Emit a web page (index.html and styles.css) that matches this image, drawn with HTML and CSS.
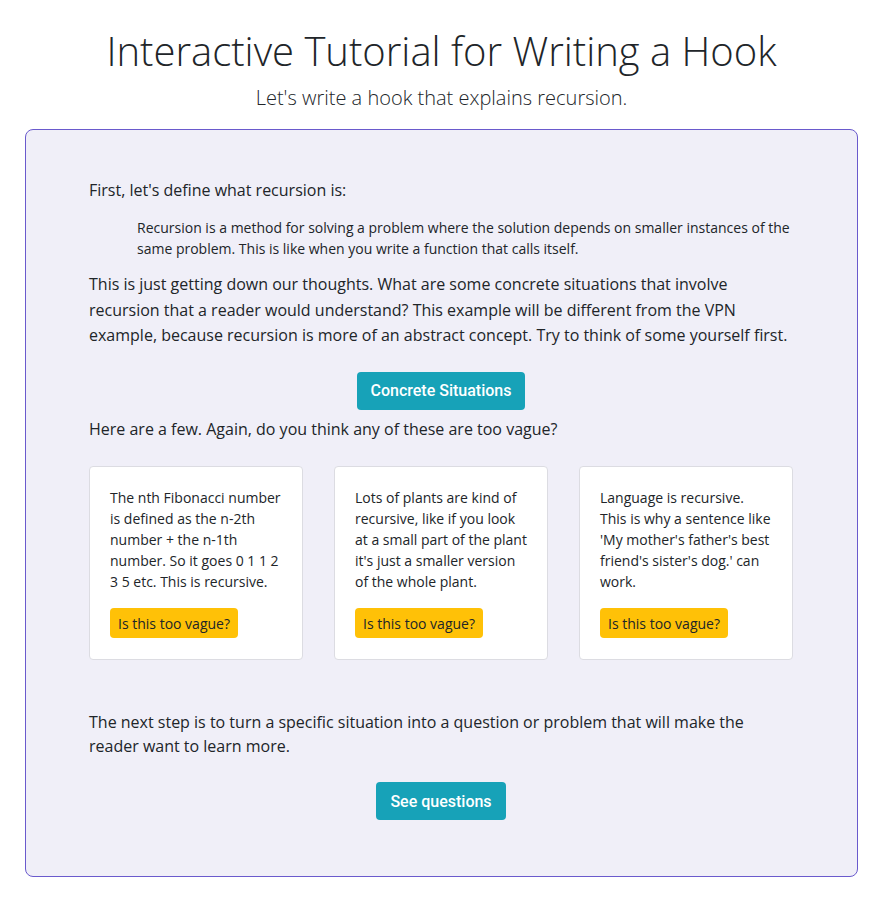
FILE: index.html
```html
<!DOCTYPE html>
<html>
<head>
<meta charset="utf-8">
<link rel="stylesheet" href="styles.css">
</head>
<body>
<header class="header">
  <h1 class="title">Interactive Tutorial for Writing a Hook</h1>
  <p class="lead">Let's write a hook that explains recursion.</p>
</header>
<main class="panel">
  <p class="intro">First, let's define what recursion is:</p>
  <blockquote class="quote">Recursion is a method for solving a problem where the solution depends on smaller instances of the same problem. This is like when you write a function that calls itself.</blockquote>
  <p class="text">This is just getting down our thoughts. What are some concrete situations that involve recursion that a reader would understand? This example will be different from the VPN example, because recursion is more of an abstract concept. Try to think of some yourself first.</p>
  <div class="center"><button class="btn btn-info">Concrete Situations</button></div>
  <p class="text few">Here are a few. Again, do you think any of these are too vague?</p>
  <div class="cards">
    <div class="card">
      <p class="card-text">The nth Fibonacci number is defined as the n-2th number + the n-1th number. So it goes 0 1 1 2 3 5 etc. This is recursive.</p>
      <button class="btn btn-warning">Is this too vague?</button>
    </div>
    <div class="card">
      <p class="card-text">Lots of plants are kind of recursive, like if you look at a small part of the plant it's just a smaller version of the whole plant.</p>
      <button class="btn btn-warning">Is this too vague?</button>
    </div>
    <div class="card">
      <p class="card-text">Language is recursive. This is why a sentence like 'My mother's father's best friend's sister's dog.' can work.</p>
      <button class="btn btn-warning">Is this too vague?</button>
    </div>
  </div>
  <p class="text next">The next step is to turn a specific situation into a question or problem that will make the reader want to learn more.</p>
  <div class="center"><button class="btn btn-info">See questions</button></div>
</main>
</body>
</html>
```
FILE: styles.css
```css
* { box-sizing: border-box; }
body {
  margin: 0;
  padding: 0 30px 40px 25px;
  font-family: "Open Sans", "DejaVu Sans", sans-serif;
  color: #212529;
  background: #fff;
}
.header {
  text-align: center;
  padding-top: 27px;
}
.title {
  margin: 0;
  font-weight: 300;
  font-size: 40px;
  line-height: 1.2;
}
.lead {
  margin: 8px 0 0 0;
  font-weight: 300;
  font-size: 20px;
  line-height: 1.5;
}
.panel {
  margin-top: 16px;
  border: 1px solid #6a5acd;
  border-radius: 8px;
  background: #f0eff8;
  padding: 48px 64px 56px 63px;
}
p { margin: 0; }
.intro {
  font-size: 16px;
  line-height: 24px;
}
.quote {
  margin: 15px 0 0 48px;
  font-size: 14px;
  line-height: 21px;
}
.text {
  font-size: 16px;
  line-height: 25.5px;
}
.quote + .text { margin-top: 13px; }
.center {
  display: flex;
  justify-content: center;
}
.text + .center { margin-top: 23px; }
.btn {
  font-family: Roboto, "Liberation Sans", sans-serif;
  border: 0;
  border-radius: 4px;
  cursor: pointer;
}
.btn-info {
  background: #17a2b8;
  color: #fff;
  font-size: 16px;
  font-weight: 500;
  padding: 0 14px;
  height: 38px;
}
.btn-warning {
  background: #ffc107;
  color: #212529;
  font-family: "Open Sans", sans-serif;
  font-size: 14px;
  height: 30px;
  padding: 0 8px;
  align-self: flex-start;
}
.few { margin-top: 7px; }
.cards {
  display: grid;
  grid-template-columns: repeat(3, 1fr);
  gap: 31px;
  margin-top: 24px;
}
.card {
  background: #fff;
  border: 1px solid #dcdce2;
  border-radius: 4px;
  padding: 20px 20px 21px 20px;
  display: flex;
  flex-direction: column;
}
.card-text {
  font-size: 14px;
  line-height: 21px;
  margin-bottom: 16px;
}
.next { margin-top: 50px; line-height: 24px; }
.next + .center { margin-top: 24px; }
```
